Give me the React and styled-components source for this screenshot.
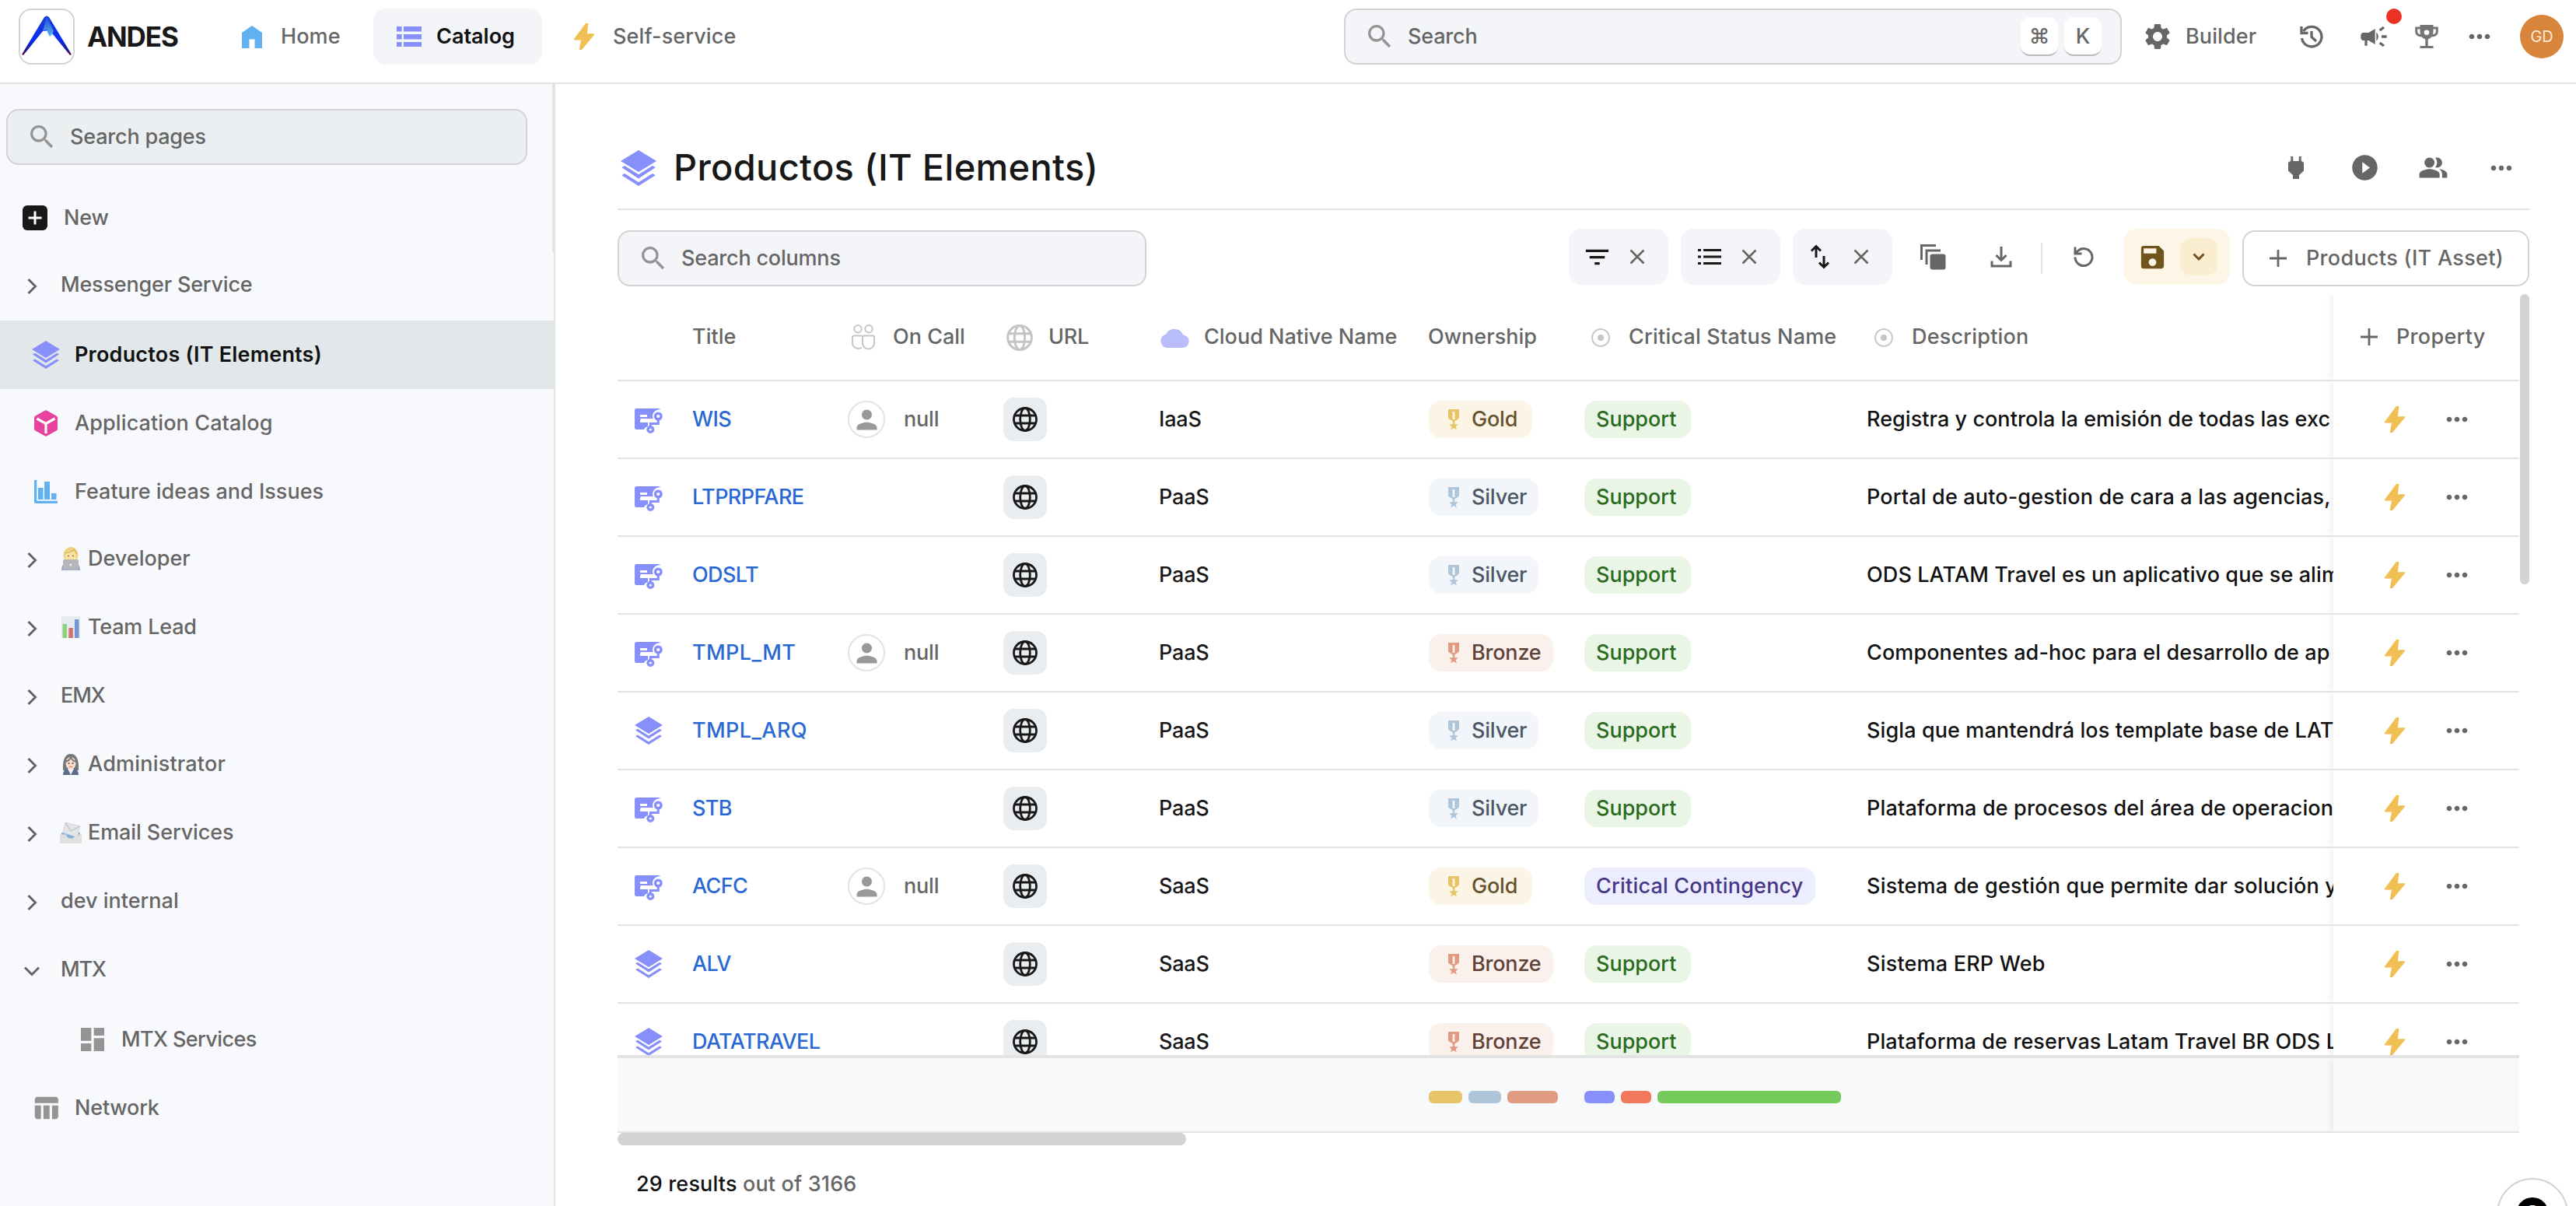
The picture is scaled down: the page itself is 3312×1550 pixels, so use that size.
import React from 'react';
import styled, { createGlobalStyle, css } from 'styled-components';
import {
  MdSearch,
  MdSettings,
  MdCampaign,
  MdMoreHoriz,
  MdPlayCircleFilled,
  MdPeopleAlt,
  MdFilterList,
  MdSave,
  MdPerson,
  MdDashboard,
  MdTableChart,
} from 'react-icons/md';

const GlobalStyle = createGlobalStyle`
  * {
    box-sizing: border-box;
  }

  body {
    margin: 0;
    background: #ffffff;
    color: #181818;
    font-family: Inter, "Liberation Sans", sans-serif;
    font-size: 27px;
    font-weight: 450;
    letter-spacing: -0.2px;
    line-height: 1.2;
    overflow: hidden;
  }

  svg {
    display: block;
    flex: none;
  }
`;

const GREY = '#666666';
const LINE = '#e3e3e3';
const PURPLE = '#878ffb';
const BOLT = '#f0c054';

/* ---------- icons ---------- */

const Stroke = ({ w, h, width = 3, color = 'currentColor', children, ...rest }) => (
  <svg
    width={w}
    height={h}
    viewBox={`0 0 ${w} ${h}`}
    fill="none"
    stroke={color}
    strokeWidth={width}
    {...rest}
  >
    {children}
  </svg>
);

const LayersIcon = ({ size = 36 }) => (
  <svg width={size} height={size} viewBox="0 0 36 36" fill={PURPLE}>
    <path d="M18 0 36 11 18 22 0 11z" />
    <path d="M1 17.5 4 15.7 18 24.4 32 15.7 35 17.5 18 28.6z" />
    <path d="M1 25.3 4 23.5 18 32.2 32 23.5 35 25.3 18 36z" />
  </svg>
);

const BoltIcon = () => (
  <svg width="26" height="34" viewBox="0 0 26 34" fill={BOLT}>
    <path d="M15 0h3.500l-1.700 13.200H26v1.500L10 34H6.700L9 21.500H0V20z" />
  </svg>
);

const HomeIcon = () => (
  <svg width="26" height="29" viewBox="0 0 26 29" fill="#61b1f2">
    <path d="M13 0 26 9v20H16.500V17.500h-7V29H0V9z" />
  </svg>
);

const CatalogIcon = () => (
  <svg width="32" height="26" viewBox="0 0 32 26" fill={PURPLE}>
    {[0, 10, 20].map((y) => (
      <React.Fragment key={y}>
        <rect x="0" y={y} width="6.500" height="6.500" />
        <rect x="9" y={y} width="23" height="6.500" />
      </React.Fragment>
    ))}
  </svg>
);

const Logo = () => (
  <svg width="66" height="52" viewBox="0 0 66 52">
    <defs>
      <linearGradient id="leg" x1="0" y1="0" x2="0" y2="1">
        <stop offset="0" stopColor="#1a3fd0" />
        <stop offset="0.6" stopColor="#0a2cf5" />
        <stop offset="0.88" stopColor="#1b1590" />
        <stop offset="1" stopColor="#7b1238" />
      </linearGradient>
      <linearGradient id="face" x1="0" y1="0" x2="0" y2="1">
        <stop offset="0" stopColor="#1846d8" />
        <stop offset="1" stopColor="#5fb7f4" />
      </linearGradient>
    </defs>
    <path d="M30 2q3-3 6 0l29 48-2 1L41 24l-4-5-9 1L3 51l-2-1z" fill="url(#leg)" />
    <path d="M33 1 42 20 40 24 37 27 35 24 33 18 28 20z" fill="url(#face)" />
  </svg>
);

const HistoryIcon = () => (
  <Stroke w={30} h={30} width={3.3}>
    <path d="M2.500 17A12.800 12.800 0 1 0 4.500 8" />
    <path d="M2 2v8.500h8.500" />
    <path d="M15 8v7.500l6 5.500" />
  </Stroke>
);

const TrophyIcon = () => (
  <svg width="30" height="30" viewBox="0 0 30 30">
    <path d="M7 4H1.700v4.500q0 5 6.300 5.500M23 4h5.300v4.500q0 5-6.300 5.500" fill="none" stroke="#757575" strokeWidth="3" />
    <path fillRule="evenodd" fill="#757575" d="M6.500 0h17v9q0 7.500-6.800 9.500V27h6.800v3h-17v-3h6.800v-8.500Q6.500 16.500 6.500 9zM15 6.500a3.300 3.300 0 1 0 0 6.600 3.300 3.300 0 0 0 0-6.600z" />
  </svg>
);

const PlugIcon = () => (
  <svg width="20" height="29" viewBox="0 0 20 29" fill={GREY}>
    <path d="M3.300 0h3v6h7.400V0h3v6q3.300 1 3.300 3v9.500L14 24v5H6v-5L0 18.500V9q0-2 3.300-3z" />
  </svg>
);

const ListIcon = () => (
  <svg width="30" height="20" viewBox="0 0 30 20" fill="#181818">
    {[0, 8.5, 17].map((y) => (
      <React.Fragment key={y}>
        <rect x="0" y={y} width="4" height="3" />
        <rect x="7" y={y} width="23" height="3" />
      </React.Fragment>
    ))}
  </svg>
);

const SortIcon = () => (
  <Stroke w={26} h={32} color="#181818">
    <path d="M8 17V2.500M2 8.500 8 2.500l6 6" />
    <path d="M18 15v14.500M12 23.500l6 6 6-6" />
  </Stroke>
);

const CloseIcon = () => (
  <Stroke w={20} h={20} width={2.6} color={GREY}>
    <path d="m1.500 1.500 17 17M18.500 1.500l-17 17" />
  </Stroke>
);

const CopyIcon = () => (
  <svg width="33" height="33" viewBox="0 0 33 33">
    <path d="M1.500 20V1.500H20M8 26V8h18" fill="none" stroke={GREY} strokeWidth="3" />
    <rect x="12.500" y="12.500" width="20" height="20" rx="3" fill={GREY} />
  </svg>
);

const DownloadIcon = () => (
  <Stroke w={28} h={28} color={GREY}>
    <path d="M14 1v17M7.500 12 14 18.500 20.500 12M2 19.500v6.500h24v-6.500" />
  </Stroke>
);

const UndoIcon = () => (
  <Stroke w={28} h={28} color={GREY}>
    <path d="M3 14.500A11 11 0 1 0 6.500 6.500L3.500 9.500M3 1.500v8.500h8.500" />
  </Stroke>
);

const PlusIcon = () => (
  <Stroke w={24} h={24} width={2.8} color={GREY}>
    <path d="M12 1v22M1 12h22" />
  </Stroke>
);

const ChevronIcon = ({ open }) => (
  <Stroke w={20} h={20} width={3} color={GREY} transform={open ? 'rotate(90)' : undefined}>
    <path d="m5.500 1 9 9-9 9" />
  </Stroke>
);

const GlobeIcon = ({ color, size = 32 }) => (
  <svg width={size} height={size} viewBox="0 0 32 32" fill="none" stroke={color} strokeWidth="2.8">
    <circle cx="16" cy="16" r="14.500" />
    <ellipse cx="16" cy="16" rx="6.300" ry="14.500" />
    <path d="M2.500 11h27M2.500 21h27" />
  </svg>
);

const UsersIcon = () => (
  <Stroke w={30} h={33} width={2} color="#c6c6c6">
    <circle cx="8" cy="5.700" r="4.700" />
    <circle cx="22" cy="5.700" r="4.700" />
    <path d="M13 14.500H2.500Q1 14.500 1 16v7.500a7.500 7.500 0 0 0 12 6" />
    <path d="M15.500 14.500h12q1.500 0 1.500 1.500v8a7 7 0 0 1-15 0v-8q0-1.500 1.500-1.500z" />
  </Stroke>
);

const CloudIcon = () => (
  <svg width="38" height="27" viewBox="0 0 38 27" fill="#b9bdfc">
    <path d="M9 27a9 9 0 0 1-1-17.600A12.500 12.500 0 0 1 30.500 10.500 8.300 8.300 0 0 1 30 27z" />
  </svg>
);

const TargetIcon = () => (
  <svg width="24" height="24" viewBox="0 0 24 24">
    <circle cx="12" cy="12" r="11" fill="none" stroke="#cacaca" strokeWidth="2" />
    <circle cx="12" cy="12" r="4" fill="#c6c6c6" />
  </svg>
);

const ServiceIcon = () => (
  <svg width="36" height="36" viewBox="0 -4 36 36">
    <path
      d="M2.500 0H30q3 0 3.500 1.500A9 9 0 0 0 23 9q0 2 .6 4H7.500v5H17v5q-4 1-5 4H2.500Q0 27 0 24.500v-22Q0 0 2.500 0z"
      fill={PURPLE}
    />
    <path d="M7 9.500h9M7 16.500h9" stroke="#ffffff" strokeWidth="3" />
    <g fill="none" stroke={PURPLE} strokeWidth="3.400">
      <circle cx="30.300" cy="10" r="3.800" fill="#ffffff" />
      <path d="M30.300 14v5.500H20.300V23" strokeWidth="3" />
      <circle cx="20.300" cy="27" r="3.300" fill="#ffffff" />
    </g>
  </svg>
);

const MedalIcon = ({ color }) => (
  <svg width="14" height="27" viewBox="0 0 14 27" fill={color}>
    <path fillRule="evenodd" d="M0 0h14v10.500q0 2-5.500 4.500V17h-3v-2Q0 12.500 0 10.500zM5.600 3v10h2.800V3z" />
    <path d="m7 15.500 1.600 3.800H13l-3.400 2.900L11 26.500l-4-2.600-4 2.600 1.400-4.300L1 19.300h4.400z" />
  </svg>
);

const NewIcon = () => (
  <svg width="32" height="32" viewBox="0 0 32 32">
    <rect width="32" height="32" rx="6" fill="#181818" />
    <path d="M16 7.500v17M7.500 16h17" stroke="#ffffff" strokeWidth="3" />
  </svg>
);

const CubeIcon = () => (
  <svg width="30" height="34" viewBox="0 0 30 34">
    <path d="M13.500.8q1.500-.9 3 0L28.500 7.500Q30 8.500 30 10v14q0 1.500-1.500 2.500l-12 6.700q-1.500.9-3 0l-12-6.700Q0 25.500 0 24V10q0-1.500 1.500-2.500z" fill="#e8429f" />
    <path d="m3.500 11 11.500 6.500L26.500 11M15 17v13" fill="none" stroke="#ffffff" strokeWidth="3.200" />
  </svg>
);

const ChartIcon = () => (
  <svg width="30" height="30" viewBox="0 0 30 30" fill="#61b1f2">
    <path d="M0 0h3.300v26.700H30V30H2q-2 0-2-2z" />
    <rect x="5" y="10" width="6.500" height="15" />
    <rect x="13" y="2" width="7" height="23" />
    <rect x="22" y="17" width="6.500" height="8" />
  </svg>
);

/* small pictograms used as page emojis */

const CoderEmoji = () => (
  <svg width="26" height="30" viewBox="0 0 26 30">
    <path d="M1 30q0-8 5-9h14q5 1 5 9z" fill="#9aa0e0" />
    <ellipse cx="13" cy="10" rx="9.500" ry="10" fill="#f0d181" />
    <ellipse cx="13" cy="12.500" rx="7" ry="8" fill="#f9e3a0" />
    <path d="M5.500 8q8-1 12-5 1 4 3.500 5" stroke="#dfb961" strokeWidth="1.500" fill="none" />
    <circle cx="10" cy="11.500" r="1" fill="#8a7550" />
    <circle cx="16" cy="11.500" r="1" fill="#8a7550" />
    <rect x="3" y="16" width="20" height="13.500" rx="1.500" fill="#b4b6b9" />
    <circle cx="13" cy="23" r="1.500" fill="#eeeeee" />
  </svg>
);

const BarsEmoji = () => (
  <svg width="24" height="28" viewBox="0 0 24 28">
    <rect width="24" height="28" fill="#e6ebef" />
    <rect x="1.500" y="10" width="5.500" height="18" fill="#8ed07e" />
    <rect x="9.300" y="15" width="5.500" height="13" fill="#d2716e" />
    <rect x="17" y="4" width="5.500" height="24" fill="#7795cf" />
  </svg>
);

const OfficeEmoji = () => (
  <svg width="22" height="27" viewBox="0 0 22 27">
    <path d="M1 21Q0 0 11 0t10 21z" fill="#77767a" />
    <path d="M1 27q0-7 6-8h8q6 1 6 8z" fill="#5d6b8c" />
    <path d="M7 19h8l-4 8z" fill="#f5f1ee" />
    <ellipse cx="11" cy="12" rx="6.500" ry="8" fill="#f6ddcc" />
    <path d="M4.500 10Q10 8 11 4q2 5 6.500 6" fill="none" stroke="#77767a" strokeWidth="2" />
    <circle cx="8.500" cy="12" r="1" fill="#5b4a44" />
    <circle cx="13.500" cy="12" r="1" fill="#5b4a44" />
    <path d="M9 16.500h4" stroke="#d8847c" strokeWidth="1.200" />
  </svg>
);

const InboxEmoji = () => (
  <svg width="28" height="27" viewBox="0 0 28 27">
    <path d="M2 13h24v9H2z" fill="#84b1dc" />
    <path d="M7 0 26 5l-4 14-18-6z" fill="#e4e5e6" stroke="#cfd1d3" strokeWidth="0.800" />
    <path d="m7 0 7 11 12-6" fill="none" stroke="#bfc2c4" strokeWidth="1.200" />
    <path d="M0 15.500h8q1 5 6 5t6-5h8V27H0z" fill="#e0e0df" />
  </svg>
);

/* ---------- header ---------- */

const Header = styled.header`
  display: flex;
  height: 108px;
  padding: 11px 16px 23px 24px;
  border-bottom: 2px solid ${LINE};
`;

const LogoBox = styled.div`
  width: 72px;
  height: 72px;
  display: flex;
  justify-content: center;
  padding-top: 7px;
  border: 2px solid #d3d3d3;
  border-radius: 16px;
`;

const Brand = styled.div`
  width: 160px;
  padding-left: 16px;
  line-height: 72px;
  font-size: 35px;
  font-weight: 700;
  letter-spacing: -1.1px;
`;

const NavItem = styled.div`
  height: 72px;
  width: ${(p) => p.$width}px;
  display: flex;
  align-items: center;
  padding-left: ${(p) => p.$pad}px;
  gap: ${(p) => p.$gap}px;
  border-radius: 16px;
  color: ${GREY};
  font-weight: 500;
  letter-spacing: 0.1px;
  ${(p) =>
    p.$active &&
    css`
      background: #f4f5f8;
      color: #121212;
      font-weight: 600;
      letter-spacing: 0;
    `}
`;

const SearchBox = styled.div`
  display: flex;
  align-items: center;
  width: ${(p) => p.$width}px;
  height: 72px;
  padding: 0 24px;
  gap: 16px;
  border: 2px solid #d3d3d3;
  border-radius: 16px;
  background: ${(p) => p.$bg || '#f4f5f8'};
  color: ${GREY};

  & > svg {
    width: 40px;
    height: 40px;
    color: #949494;
  }
`;

const Keys = styled.div`
  display: flex;
  gap: 8px;
  margin-left: auto;
`;

const Key = styled.kbd`
  width: 48px;
  height: 50px;
  border-radius: 12px;
  background: #ffffff;
  border-bottom: 2px solid #b8bcbf;
  font-family: Inter, "DejaVu Sans", sans-serif;
  font-size: 27px;
  line-height: 49px;
  text-align: center;
`;

const HeaderActions = styled.div`
  display: flex;
  align-items: center;
  height: 72px;
  margin-left: 26px;
  color: ${GREY};
`;

const BuilderLink = styled.div`
  width: 203px;
  display: flex;
  align-items: center;
  gap: 16px;
  font-weight: 500;
  letter-spacing: 0.1px;
`;

const Slot = styled.div`
  position: relative;
  width: ${(p) => p.$width}px;
`;

const Dot = styled.span`
  position: absolute;
  top: -16px;
  left: 36px;
  width: 20px;
  height: 20px;
  border-radius: 50%;
  background: #ec3323;
`;

const Avatar = styled.div`
  width: 56px;
  height: 56px;
  border-radius: 50%;
  background: #d9843b;
  color: #fbeada;
  font-size: 20px;
  font-weight: 400;
  line-height: 56px;
  text-align: center;
`;

/* ---------- sidebar ---------- */

const Body = styled.div`
  display: flex;
  height: 1442px;
`;

const Sidebar = styled.aside`
  width: 714px;
  flex: none;
  background: #f8f9fc;
  border-right: 2px solid ${LINE};
`;

const PinnedPages = styled.div`
  height: 216px;
  padding-top: 32px;
  border-right: 2px solid ${LINE};
`;

const SideSearch = styled.div`
  padding-left: 8px;
  margin-bottom: 24px;
`;

const SideRow = styled.div`
  height: 88px;
  display: flex;
  align-items: center;
  padding-left: ${(p) => p.$indent}px;
  color: ${GREY};
  ${(p) =>
    p.$selected &&
    css`
      background: #e2e8ea;
      color: #121212;
      font-weight: 600;
    `}
`;

const SideIcon = styled.div`
  width: ${(p) => p.$width}px;
  display: flex;
  justify-content: center;
  margin-right: ${(p) => p.$gap}px;
`;

const SideLabel = styled.span`
  display: flex;
  align-items: center;
  gap: 9px;
  margin-top: ${(p) => (p.$group ? -4 : 0)}px;
  letter-spacing: ${(p) => p.$spacing}px;
`;

const Emoji = styled.span`
  width: 26px;
  height: 34px;
  display: flex;
  align-items: center;
  justify-content: center;
`;

/* ---------- page ---------- */

const Main = styled.main`
  flex: 1;
  min-width: 0;
  padding: 0 60px 0 80px;
`;

const PageHeader = styled.div`
  height: 162px;
  display: flex;
  align-items: center;
  padding: 55px 16px 0 4px;
  border-bottom: 2px solid ${LINE};
`;

const PageTitle = styled.h1`
  margin: 0 auto 0 22px;
  font-size: 47px;
  font-weight: 550;
  letter-spacing: 0.3px;
`;

const PageActions = styled.div`
  display: flex;
  align-items: center;
  color: ${GREY};
`;

const ActionSlot = styled.div`
  width: 88px;
  display: flex;
  justify-content: center;

  &:last-child {
    width: 40px;
    margin-left: 24px;
  }
`;

const Toolbar = styled.div`
  height: 108px;
  display: flex;
  align-items: flex-start;
  padding-top: 24px;
`;

const ToolbarSearch = styled.div`
  padding-top: 2px;
  margin-right: auto;
`;

const ChipButton = styled.div`
  width: 128px;
  height: 72px;
  margin-right: 16px;
  display: flex;
  align-items: center;
  justify-content: space-between;
  padding: 0 30px 0 ${(p) => p.$pad || 22}px;
  border-radius: 16px;
  background: #f4f5f8;
`;

const ToolIcon = styled.div`
  width: ${(p) => p.$width}px;
  height: 72px;
  display: flex;
  align-items: center;
  justify-content: center;
`;

const ToolDivider = styled.div`
  width: 2px;
  height: 40px;
  margin: 18px 0 0;
  background: ${LINE};
`;

const SaveGroup = styled.div`
  width: 136px;
  height: 72px;
  display: flex;
  align-items: center;
  justify-content: space-between;
  padding: 0 16px 0 17px;
  border-radius: 16px;
  background: #fdf5e6;
  color: #6f541c;
`;

const SaveMenu = styled.div`
  width: 48px;
  height: 48px;
  display: flex;
  align-items: center;
  justify-content: center;
  border-radius: 14px;
  background: #fbedd0;
`;

const CreateButton = styled.button`
  width: 369px;
  height: 72px;
  margin: 2px 0 0 16px;
  display: flex;
  align-items: center;
  gap: 24px;
  padding: 0 0 0 32px;
  border: 2px solid #d3d3d3;
  border-radius: 16px;
  background: #ffffff;
  color: ${GREY};
  font: inherit;
  font-weight: 500;
  letter-spacing: 0.3px;
  white-space: nowrap;
`;

/* ---------- table ---------- */

const TableWrap = styled.div`
  display: flex;
  justify-content: space-between;
`;

const Table = styled.div`
  width: 2445px;
`;

const Row = styled.div`
  display: grid;
  grid-template-columns: 80px 200px 200px 200px 346px 200px 364px 616px 239px;
  height: ${(p) => p.$height}px;
  border-bottom: 2px solid ${LINE};
  background: ${(p) => p.$bg || '#ffffff'};
  ${(p) => p.$top && `border-top: 4px solid ${LINE};`}
`;

const Cell = styled.div`
  display: flex;
  align-items: center;
  min-width: 0;
  padding-left: ${(p) => (p.$pad === undefined ? 16 : p.$pad)}px;
  gap: ${(p) => p.$gap || 0}px;
  overflow: hidden;
  white-space: nowrap;
`;

const HeadCell = styled(Cell)`
  color: ${GREY};
  padding-top: 1px;
  letter-spacing: ${(p) => p.$spacing || 0}px;
`;

const PinnedCell = styled(Cell)`
  overflow: visible;
  background: ${(p) => p.$bg || '#ffffff'};
  box-shadow: -4px 0 8px rgba(0, 0, 0, 0.06);
  clip-path: inset(0 0 0 -16px);
  color: ${GREY};
  letter-spacing: 0.3px;
`;

const Rows = styled.div`
  height: 866px;
  overflow: hidden;
`;

const TitleLink = styled.a`
  color: #2a68d4;
  font-weight: 500;
  letter-spacing: ${(p) => p.$spacing}px;
`;

const Person = styled.span`
  width: 48px;
  height: 48px;
  display: flex;
  align-items: center;
  justify-content: center;
  border: 2px solid ${LINE};
  border-radius: 50%;
  color: #999999;
`;

const NullText = styled.span`
  color: ${GREY};
`;

const UrlButton = styled.span`
  width: 56px;
  height: 56px;
  display: flex;
  align-items: center;
  justify-content: center;
  border-radius: 14px;
  background: #e9edf0;
`;

const Description = styled.span`
  color: #121212;
  letter-spacing: ${(p) => p.$spacing}px;
`;

const tones = {
  Gold: { bg: '#fcf5e6', text: '#65532f', icon: '#e8c468', width: 133 },
  Silver: { bg: '#f2f5f9', text: '#4b5866', icon: '#afc6da', width: 141 },
  Bronze: { bg: '#faf0ec', text: '#5f4137', icon: '#e09b82', width: 160 },
  Support: { bg: '#e9f6e5', text: '#2b6b21', width: 137, spacing: 0 },
  'Critical Contingency': { bg: '#ecedfe', text: '#473787', width: 297, spacing: 0.2 },
};

const Badge = styled.span`
  width: ${(p) => p.$tone.width}px;
  height: 48px;
  display: flex;
  align-items: center;
  gap: 16px;
  padding-left: ${(p) => (p.$tone.icon ? 25 : 15)}px;
  border-radius: 16px;
  background: ${(p) => p.$tone.bg};
  color: ${(p) => p.$tone.text};
  letter-spacing: ${(p) => p.$tone.spacing}px;
`;

const Meter = styled.span`
  width: ${(p) => p.$width}px;
  height: 16px;
  border-radius: 6px;
  background: ${(p) => p.$color};
`;

const MeterCell = styled(Cell)`
  padding-left: 17px;
  padding-top: 5px;
  gap: 8px;
`;

const VerticalThumb = styled.div`
  width: 12px;
  height: 373px;
  border-radius: 6px;
  background: #d3d3d3;
`;

const HorizontalThumb = styled.div`
  width: 731px;
  height: 16px;
  border-radius: 8px;
  background: #d3d3d3;
`;

const Results = styled.div`
  padding: 34px 0 0 24px;
  color: ${GREY};
  letter-spacing: 0.15px;

  b {
    color: #121212;
    font-weight: 500;
  }
`;

const HelpButton = styled.div`
  position: fixed;
  left: 3210px;
  top: 1514px;
  width: 92px;
  height: 92px;
  display: flex;
  align-items: center;
  justify-content: center;
  border: 2px solid #d3d3d3;
  border-radius: 50%;
  background: #ffffff;
`;

const HelpDot = styled.div`
  width: 42px;
  height: 42px;
  border-radius: 50%;
  background: #000000;
  color: #ffffff;
  font-size: 30px;
  font-weight: 700;
  line-height: 42px;
  text-align: center;
`;

const sidebarPages = [
  { label: 'Messenger Service', group: true },
  { label: 'Productos (IT Elements)', icon: <LayersIcon />, selected: true, spacing: 0.2 },
  { label: 'Application Catalog', icon: <CubeIcon />, spacing: 0.1 },
  { label: 'Feature ideas and Issues', icon: <ChartIcon />, spacing: 0 },
  { label: 'Developer', group: true, emoji: <CoderEmoji />, spacing: 0 },
  { label: 'Team Lead', group: true, emoji: <BarsEmoji /> },
  { label: 'EMX', group: true, spacing: -1.1 },
  { label: 'Administrator', group: true, emoji: <OfficeEmoji />, spacing: 0.2 },
  { label: 'Email Services', group: true, emoji: <InboxEmoji />, spacing: -0.1 },
  { label: 'dev internal', group: true, spacing: 0 },
  { label: 'MTX', group: true, open: true, spacing: -1.1 },
  { label: 'MTX Services', icon: <MdDashboard size={40} color="#949494" />, nested: true, spacing: -0.6 },
  { label: 'Network', icon: <MdTableChart size={38} color="#949494" /> },
];

const rows = [
  { title: 'WIS', service: true, onCall: true, cloud: 'IaaS', owner: 'Gold', status: 'Support', text: 'Registra y controla la emisión de todas las exc', spacing: 0.05 },
  { title: 'LTPRPFARE', service: true, cloud: 'PaaS', owner: 'Silver', status: 'Support', text: 'Portal de auto-gestion de cara a las agencias,', spacing: 0.15 },
  { title: 'ODSLT', service: true, cloud: 'PaaS', owner: 'Silver', status: 'Support', text: 'ODS LATAM Travel es un aplicativo que se alim', spacing: 0.1 },
  { title: 'TMPL_MT', service: true, onCall: true, cloud: 'PaaS', owner: 'Bronze', status: 'Support', text: 'Componentes ad-hoc para el desarrollo de ap', spacing: 0.1 },
  { title: 'TMPL_ARQ', cloud: 'PaaS', owner: 'Silver', status: 'Support', text: 'Sigla que mantendrá los template base de LAT', spacing: 0.1 },
  { title: 'STB', service: true, cloud: 'PaaS', owner: 'Silver', status: 'Support', text: 'Plataforma de procesos del área de operacion', spacing: 0.15 },
  { title: 'ACFC', service: true, onCall: true, cloud: 'SaaS', owner: 'Gold', status: 'Critical Contingency', text: 'Sistema de gestión que permite dar solución y', spacing: 0.2 },
  { title: 'ALV', cloud: 'SaaS', owner: 'Bronze', status: 'Support', text: 'Sistema ERP Web', spacing: 0.2 },
  { title: 'DATATRAVEL', cloud: 'SaaS', owner: 'Bronze', status: 'Support', text: 'Plataforma de reservas Latam Travel BR ODS L', spacing: 0.1 },
];

const SidebarItem = ({ page }) => {
  if (page.group) {
    return (
      <SideRow $indent={31}>
        <SideIcon $width={20} $gap={27}>
          <ChevronIcon open={page.open} />
        </SideIcon>
        <SideLabel $group $spacing={page.spacing}>
          {page.emoji && <Emoji>{page.emoji}</Emoji>}
          {page.label}
        </SideLabel>
      </SideRow>
    );
  }
  return (
    <SideRow $indent={page.nested ? 99 : 39} $selected={page.selected}>
      <SideIcon $width={40} $gap={17}>
        {page.icon}
      </SideIcon>
      <SideLabel $spacing={page.spacing}>{page.label}</SideLabel>
    </SideRow>
  );
};

const PropertyBadge = ({ name }) => (
  <Badge $tone={tones[name]}>
    {tones[name].icon && <MedalIcon color={tones[name].icon} />}
    {name}
  </Badge>
);

const TableRow = ({ row }) => (
  <Row $height={100}>
    <Cell $pad={22}>{row.service ? <ServiceIcon /> : <LayersIcon />}</Cell>
    <Cell>
      <TitleLink $spacing={row.title.includes('_') ? 0.4 : -0.6}>{row.title}</TitleLink>
    </Cell>
    <Cell $gap={24}>
      {row.onCall && (
        <>
          <Person>
            <MdPerson size={39} />
          </Person>
          <NullText>null</NullText>
        </>
      )}
    </Cell>
    <Cell>
      <UrlButton>
        <GlobeIcon color="#181818" />
      </UrlButton>
    </Cell>
    <Cell>{row.cloud}</Cell>
    <Cell $pad={17}>
      <PropertyBadge name={row.owner} />
    </Cell>
    <Cell $pad={17}>
      <PropertyBadge name={row.status} />
    </Cell>
    <Cell>
      <Description $spacing={row.spacing}>{row.text}</Description>
    </Cell>
    <PinnedCell $pad={66} $gap={47}>
      <BoltIcon />
      <MdMoreHoriz size={40} />
    </PinnedCell>
  </Row>
);

export default function App() {
  return (
    <>
      <GlobalStyle />
      <Header>
        <LogoBox>
          <Logo />
        </LogoBox>
        <Brand>ANDES</Brand>
        <NavItem $width={224} $pad={55} $gap={24}>
          <HomeIcon />
          Home
        </NavItem>
        <NavItem $width={217} $pad={30} $gap={19} $active>
          <CatalogIcon />
          Catalog
        </NavItem>
        <NavItem $width={1031} $pad={41} $gap={24}>
          <BoltIcon />
          Self-service
        </NavItem>
        <SearchBox $width={1000}>
          <MdSearch />
          Search
          <Keys>
            <Key>⌘</Key>
            <Key>K</Key>
          </Keys>
        </SearchBox>
        <HeaderActions>
          <BuilderLink>
            <MdSettings size={40} />
            Builder
          </BuilderLink>
          <Slot $width={75}>
            <HistoryIcon />
          </Slot>
          <Slot $width={73}>
            <MdCampaign size={40} />
            <Dot />
          </Slot>
          <Slot $width={63}>
            <TrophyIcon />
          </Slot>
          <Slot $width={72}>
            <MdMoreHoriz size={40} />
          </Slot>
          <Avatar>GD</Avatar>
        </HeaderActions>
      </Header>

      <Body>
        <Sidebar>
          <PinnedPages>
            <SideSearch>
              <SearchBox $width={670} $bg="#ebeff1">
                <MdSearch />
                Search pages
              </SearchBox>
            </SideSearch>
            <SideRow $indent={29}>
              <SideIcon $width={32} $gap={21}>
                <NewIcon />
              </SideIcon>
              New
            </SideRow>
          </PinnedPages>
          {sidebarPages.map((page) => (
            <SidebarItem key={page.label} page={page} />
          ))}
        </Sidebar>

        <Main>
          <PageHeader>
            <LayersIcon size={46} />
            <PageTitle>Productos (IT Elements)</PageTitle>
            <PageActions>
              <ActionSlot>
                <PlugIcon />
              </ActionSlot>
              <ActionSlot>
                <MdPlayCircleFilled size={39} />
              </ActionSlot>
              <ActionSlot>
                <MdPeopleAlt size={39} />
              </ActionSlot>
              <ActionSlot>
                <MdMoreHoriz size={40} />
              </ActionSlot>
            </PageActions>
          </PageHeader>

          <Toolbar>
            <ToolbarSearch>
              <SearchBox $width={680}>
                <MdSearch />
                Search columns
              </SearchBox>
            </ToolbarSearch>
            <ChipButton $pad={17}>
              <MdFilterList size={39} color="#181818" />
              <CloseIcon />
            </ChipButton>
            <ChipButton>
              <ListIcon />
              <CloseIcon />
            </ChipButton>
            <ChipButton>
              <SortIcon />
              <CloseIcon />
            </ChipButton>
            <ToolIcon $width={72}>
              <CopyIcon />
            </ToolIcon>
            <ToolIcon $width={103}>
              <DownloadIcon />
            </ToolIcon>
            <ToolDivider />
            <ToolIcon $width={105}>
              <UndoIcon />
            </ToolIcon>
            <SaveGroup>
              <MdSave size={39} />
              <SaveMenu>
                <Stroke w={16} h={10}>
                  <path d="m1.500 1.500 6.500 6.500 6.500-6.500" />
                </Stroke>
              </SaveMenu>
            </SaveGroup>
            <CreateButton>
              <PlusIcon />
              Products (IT Asset)
            </CreateButton>
          </Toolbar>

          <TableWrap>
            <Table>
              <Row $height={112}>
                <HeadCell />
                <HeadCell>Title</HeadCell>
                <HeadCell $pad={21} $gap={23}>
                  <UsersIcon />
                  On Call
                </HeadCell>
                <HeadCell $pad={20} $gap={20} $spacing={-0.3}>
                  <GlobeIcon color="#c4c4c4" size={34} />
                  URL
                </HeadCell>
                <HeadCell $pad={17} $gap={19}>
                  <CloudIcon />
                  Cloud Native Name
                </HeadCell>
                <HeadCell>Ownership</HeadCell>
                <HeadCell $pad={26} $gap={24} $spacing={0.2}>
                  <TargetIcon />
                  Critical Status Name
                </HeadCell>
                <HeadCell $pad={26} $gap={24} $spacing={0.2}>
                  <TargetIcon />
                  Description
                </HeadCell>
                <PinnedCell $pad={34} $gap={23}>
                  <PlusIcon />
                  Property
                </PinnedCell>
              </Row>
              <Rows>
                {rows.map((row) => (
                  <TableRow key={row.title} row={row} />
                ))}
              </Rows>
              <Row $height={100} $top $bg="#f8f9fb">
                <Cell />
                <Cell />
                <Cell />
                <Cell />
                <Cell />
                <MeterCell>
                  <Meter $width={43} $color="#e8c468" />
                  <Meter $width={42} $color="#afc6da" />
                  <Meter $width={65} $color="#e09b82" />
                </MeterCell>
                <MeterCell>
                  <Meter $width={39} $color="#878ffb" />
                  <Meter $width={39} $color="#f2785c" />
                  <Meter $width={236} $color="#74cb5b" />
                </MeterCell>
                <Cell />
                <PinnedCell $bg="#f8f9fb" />
              </Row>
              <HorizontalThumb />
            </Table>
            <VerticalThumb />
          </TableWrap>
          <Results>
            <b>29 results</b> out of 3166
          </Results>
        </Main>
      </Body>

      <HelpButton>
        <HelpDot>?</HelpDot>
      </HelpButton>
    </>
  );
}
